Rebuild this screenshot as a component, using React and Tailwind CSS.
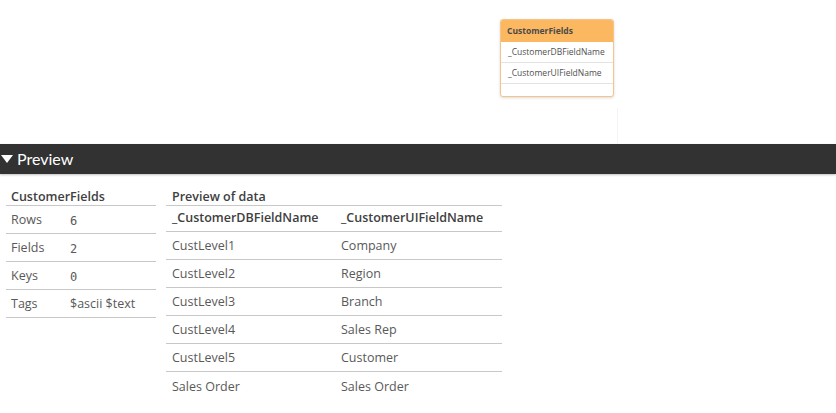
import React from "react";

const META = [
  ["Rows", "6"],
  ["Fields", "2"],
  ["Keys", "0"],
  ["Tags", "$ascii $text"],
];

const ROWS = [
  ["CustLevel1", "Company"],
  ["CustLevel2", "Region"],
  ["CustLevel3", "Branch"],
  ["CustLevel4", "Sales Rep"],
  ["CustLevel5", "Customer"],
  ["Sales Order", "Sales Order"],
];

const font = { fontFamily: '"Open Sans", "Noto Sans", sans-serif' };

export default function App() {
  return (
    <div className="w-[836px] h-[413px] bg-white overflow-hidden" style={font}>
      {/* model canvas */}
      <div className="relative h-[144px]">
        <div className="absolute left-[500px] top-[19px] w-[114px] h-[78px] rounded-[3px] border border-[#f3c48c] bg-white shadow-[0_1px_3px_rgba(0,0,0,0.15)] overflow-hidden">
          <div className="h-[22px] bg-[#fbb861] px-[6px] flex items-center text-[8.5px] font-bold text-[#4a4a4a]">
            CustomerFields
          </div>
          <div className="h-[21px] px-[7px] flex items-center text-[8.5px] text-[#4f4f4f] border-b border-[#e3e3e3]">
            _CustomerDBFieldName
          </div>
          <div className="h-[21px] px-[7px] flex items-center text-[8.5px] text-[#4f4f4f] border-b border-[#e3e3e3]">
            _CustomerUIFieldName
          </div>
        </div>
        <div className="absolute left-[617px] top-[108px] w-px h-[36px] bg-[#f2f4f6]" />
      </div>

      {/* preview bar */}
      <div
        className="h-[30px] bg-[#323232] flex items-center gap-[4px] pl-[1px] text-white text-[16px] shadow-[0_1px_2px_rgba(0,0,0,0.25)]"
        style={{ fontFamily: 'Lato, "Open Sans", sans-serif' }}
      >
        <svg width="12" height="10" viewBox="0 0 12 10">
          <path d="M0 1h12L6 9z" fill="#fff" />
        </svg>
        <span>Preview</span>
      </div>

      <div className="flex gap-[10px] pl-[6px] pt-[13px] text-[12.5px] text-[#595959]">
        {/* table meta */}
        <div className="w-[150px]">
          <div className="h-[19px] border-b border-[#c8c8c8] pl-[5px] font-semibold text-[#404040] leading-[19px]">
            CustomerFields
          </div>
          {META.map(([k, v]) => (
            <div key={k} className="h-[28px] border-b border-[#c8c8c8] flex items-center pt-[2px] pl-[5px]">
              <span className="w-[59px]">{k}</span>
              <span style={k === "Tags" ? undefined : { fontFamily: '"DejaVu Sans Mono", monospace', fontSize: "12px" }}>
                {v}
              </span>
            </div>
          ))}
        </div>

        {/* data preview */}
        <div className="w-[336px]">
          <div className="h-[19px] border-b border-[#c8c8c8] pl-[6px] font-semibold text-[#404040] leading-[19px]">
            Preview of data
          </div>
          <div className="h-[26px] border-b border-[#c8c8c8] flex items-center pl-[6px] font-semibold text-[#404040]">
            <span className="w-[169px]">_CustomerDBFieldName</span>
            <span>_CustomerUIFieldName</span>
          </div>
          {ROWS.map(([a, b], i) => (
            <div
              key={a + i}
              className={
                "h-[28px] flex items-center pt-[2px] pl-[6px] " +
                (i < ROWS.length - 1 ? "border-b border-[#c8c8c8]" : "")
              }
            >
              <span className="w-[169px]">{a}</span>
              <span>{b}</span>
            </div>
          ))}
        </div>
      </div>
    </div>
  );
}
